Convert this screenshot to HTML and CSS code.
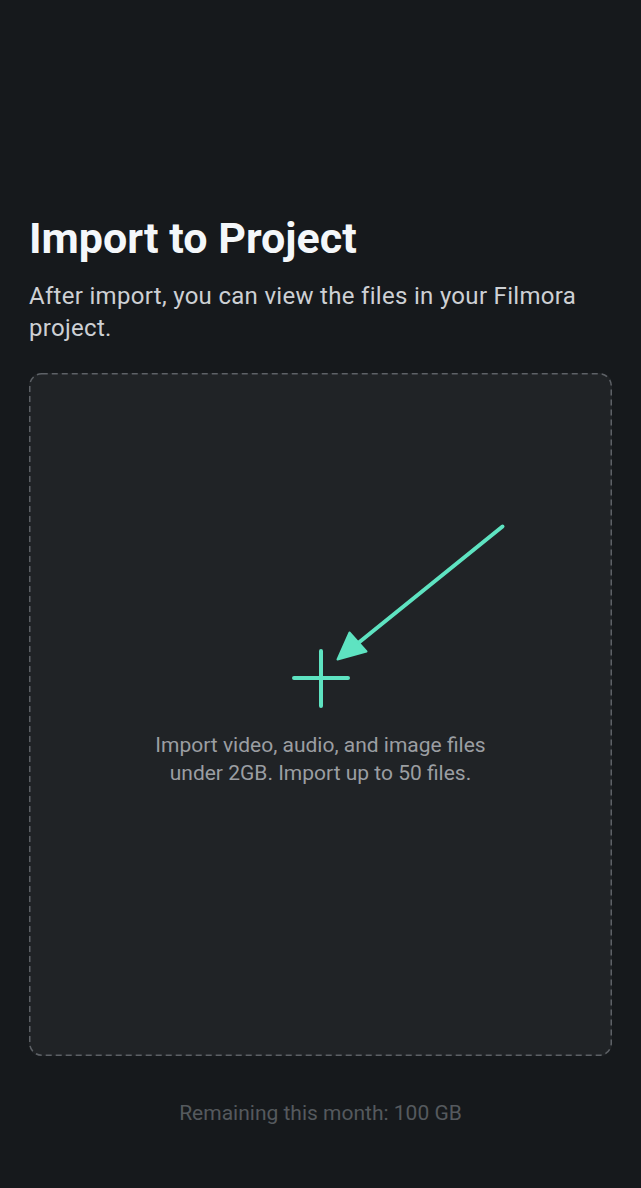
FILE: index.html
```html
<!DOCTYPE html>
<html lang="en">
<head>
<meta charset="utf-8">
<title>Import to Project</title>
<link rel="stylesheet" href="styles.css">
</head>
<body>
<main class="page">
  <h1 class="title">Import to Project</h1>
  <p class="subtitle">After import, you can view the files in your Filmora project.</p>
  <section class="dropzone">
    <svg class="frame" width="583" height="683" viewBox="0 0 583 683" aria-hidden="true">
      <rect x="0.75" y="0.75" width="581.5" height="681.5" rx="12" ry="12" fill="none" stroke="#5d6166" stroke-width="1.5" stroke-dasharray="6 4"/>
    </svg>
    <svg class="arrow" width="180" height="150" viewBox="0 0 180 150" aria-hidden="true">
      <line x1="172.5" y1="6.5" x2="27" y2="124" stroke="#5ee3c1" stroke-width="4" stroke-linecap="round"/>
      <polygon points="7.5,139.5 19.5,112.5 36.5,131.5" fill="#5ee3c1" stroke="#5ee3c1" stroke-width="2" stroke-linejoin="round"/>
    </svg>
    <svg class="plus" width="60" height="60" viewBox="0 0 60 60" aria-hidden="true">
      <path d="M30 3 V58 M3 30 H57" stroke="#5ee3c1" stroke-width="4" stroke-linecap="round" fill="none"/>
    </svg>
    <p class="hint">Import video, audio, and image files<br>under 2GB. Import up to 50 files.</p>
  </section>
  <p class="quota">Remaining this month: 100 GB</p>
</main>
</body>
</html>
```
FILE: styles.css
```css
* { box-sizing: border-box; }
html, body {
  margin: 0;
  padding: 0;
  background: #16191c;
}
body {
  font-family: Roboto, "Noto Sans", "Liberation Sans", sans-serif;
  width: 641px;
  height: 1188px;
  overflow: hidden;
}
.page {
  padding: 213px 29px 0 29px;
  display: flex;
  flex-direction: column;
}
.title {
  margin: 0;
  font-size: 43px;
  line-height: 50px;
  font-weight: 700;
  color: #f4f7fa;
}
.subtitle {
  margin: 17px 0 0 0;
  font-size: 24px;
  line-height: 32px;
  font-weight: 400;
  color: #cdd0d4;
  letter-spacing: 0.3px;
  max-width: 570px;
}
.dropzone {
  position: relative;
  margin-top: 29px;
  height: 683px;
  border-radius: 12px;
  background: #202326;
  display: flex;
  flex-direction: column;
  align-items: center;
  padding-top: 275px;
}
.frame {
  position: absolute;
  left: 0;
  top: 0;
}
.arrow {
  position: absolute;
  left: 301px;
  top: 147px;
}
.plus {
  display: block;
}
.hint {
  margin: 23px 0 0 0;
  font-size: 21px;
  line-height: 28px;
  color: #9b9ea2;
  text-align: center;
}
.quota {
  margin: 43px 0 0 0;
  font-size: 21px;
  line-height: 28px;
  color: #55595e;
  text-align: center;
}
```
